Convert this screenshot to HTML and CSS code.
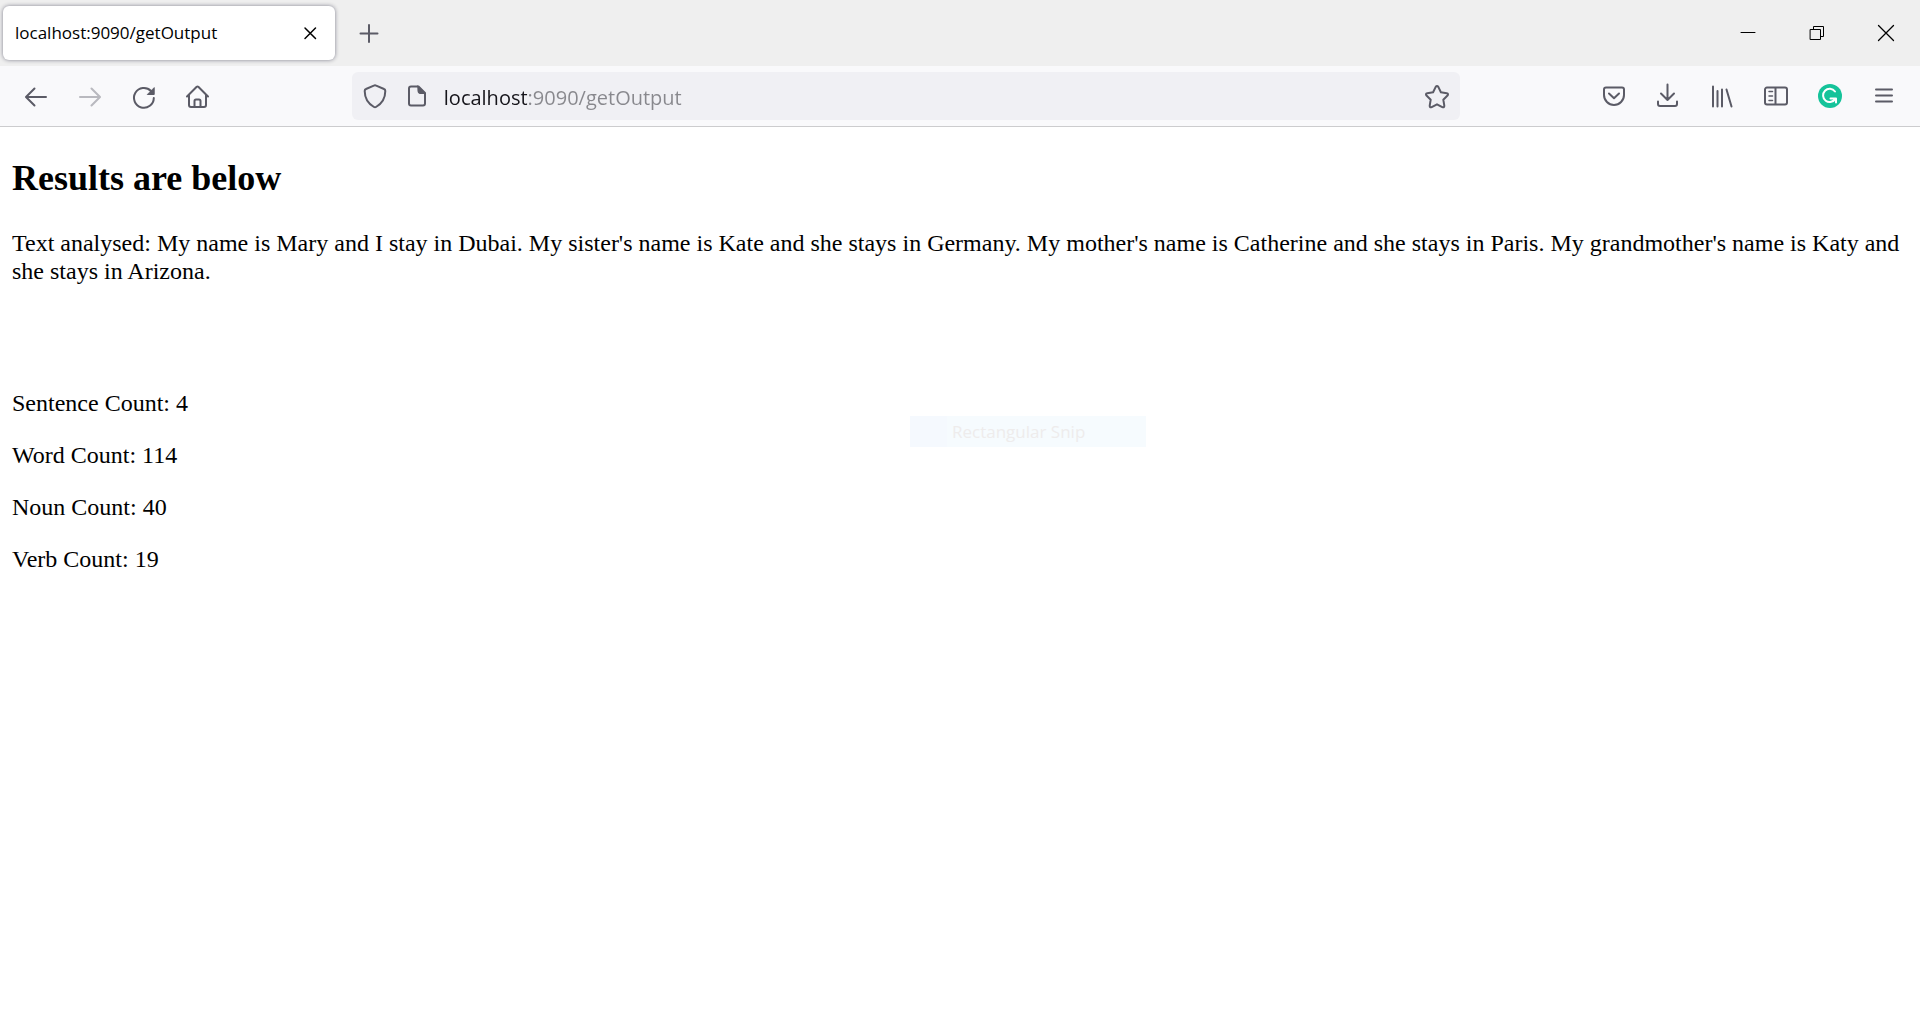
FILE: index.html
```html
<!DOCTYPE html>
<html lang="en">
<head>
<meta charset="utf-8">
<title>localhost:9090/getOutput</title>
<link rel="stylesheet" href="styles.css">
</head>
<body>
<header class="browser">
  <div class="tab-strip">
    <div class="tab">
      <span class="tab-title">localhost:9090/getOutput</span>
      <button class="tab-close" type="button" aria-label="Close tab">
        <svg class="icon" viewBox="0 0 30 30"><path d="M10 10l10.500 10.500M20.500 10L10 20.500" stroke-width="1.500"/></svg>
      </button>
    </div>
    <button class="tool-button" type="button" aria-label="New tab">
      <svg class="icon" viewBox="0 0 30 30"><path d="M15 7v17M6.500 15.500h17"/></svg>
    </button>
    <div class="window-controls">
      <button class="window-button" type="button" aria-label="Minimize">
        <svg class="icon" viewBox="0 0 30 30"><path d="M8 14.500h14" stroke-width="1"/></svg>
      </button>
      <button class="window-button" type="button" aria-label="Restore">
        <svg class="icon" viewBox="0 0 30 30"><path d="M8.500 11.500h10v10h-10zM11.500 11v-2.500h10v10H19" stroke-width="1"/></svg>
      </button>
      <button class="window-button" type="button" aria-label="Close window">
        <svg class="icon" viewBox="0 0 30 30"><path d="M7.500 7.500l15 15M22.500 7.500l-15 15" stroke-width="1.300"/></svg>
      </button>
    </div>
  </div>
  <nav class="toolbar" aria-label="Navigation">
    <div class="tool-group">
      <button class="tool-button" type="button" aria-label="Back">
        <svg class="icon" viewBox="0 0 30 30"><path d="M25 16H5.500M13.500 7.500L5 16l8.500 8.500"/></svg>
      </button>
      <button class="tool-button" type="button" aria-label="Forward" disabled>
        <svg class="icon" viewBox="0 0 30 30"><path d="M5 16h19.500M16.500 7.500L25 16l-8.500 8.500"/></svg>
      </button>
      <button class="tool-button" type="button" aria-label="Reload">
        <svg class="icon" viewBox="0 0 30 30"><path d="M24.800 17A9.900 9.900 0 1 1 22 10"/><path class="solid" d="M25.200 7v6.500h-6.500z"/></svg>
      </button>
      <button class="tool-button" type="button" aria-label="Home">
        <svg class="icon" viewBox="0 0 30 30"><path d="M4 15.500L13.700 5.800q.8-.7 1.600 0L25 15.500M6 13.500V24a2 2 0 0 0 2 2h13a2 2 0 0 0 2-2V13.500M11.500 26v-6a1.500 1.500 0 0 1 1.500-1.500h3a1.500 1.500 0 0 1 1.500 1.500v6"/></svg>
      </button>
    </div>
    <div class="url-bar">
      <svg class="icon" viewBox="0 0 30 30"><path d="M15 4.200q.6 0 1.200.4L24 8q1.300.5 1.300 2C25.300 17 22 22.500 16 26q-1 .6-2 0C8 22.500 4.700 17 4.700 10q0-1.500 1.300-2l7.800-3.400q.6-.4 1.200-.4z"/></svg>
      <svg class="icon" viewBox="0 0 30 30"><path d="M16.500 5.500H9a2 2 0 0 0-2 2v15a2 2 0 0 0 2 2h12a2 2 0 0 0 2-2V12z"/><path class="solid" d="M16 5l7.500 7.500H18a2 2 0 0 1-2-2z"/></svg>
      <input class="url-input" type="text" value="localhost:9090/getOutput" aria-label="Address">
      <button class="star-button" type="button" aria-label="Bookmark this page">
        <svg class="icon" viewBox="0 0 30 30"><path d="M13.700 5.900q1.300-2 2.600 0l2.600 5.400 5.800.9q2.200.6.800 2.300l-4.200 4.200 1 5.900q.1 2.300-2 1.500L15 23.300l-5.300 2.800q-2.100.8-2-1.500l1-5.900L4.500 14.500q-1.400-1.700.8-2.300l5.800-.9z"/></svg>
      </button>
    </div>
    <div class="tool-group tool-group-end">
      <button class="tool-button" type="button" aria-label="Save to Pocket">
        <svg class="icon" viewBox="0 0 30 30"><path d="M7 6.500h16a2 2 0 0 1 2 2V14a10 10 0 0 1-20 0V8.500a2 2 0 0 1 2-2zM10 12.500l5 4.700 5-4.700"/></svg>
      </button>
      <button class="tool-button" type="button" aria-label="Downloads">
        <svg class="icon" viewBox="0 0 30 30"><path d="M14.500 3.500V19M8 12.500l6.500 6.500 6.500-6.500M5 20.500V23a2 2 0 0 0 2 2h15a2 2 0 0 0 2-2v-2.500"/></svg>
      </button>
      <button class="tool-button" type="button" aria-label="Library">
        <svg class="icon" viewBox="0 0 30 30"><path d="M6 5.500v20M10.500 10v15.500M15 8.500v17M19.500 8.500l5 17"/></svg>
      </button>
      <button class="tool-button" type="button" aria-label="Sidebars">
        <svg class="icon" viewBox="0 0 30 30"><path d="M6 6.500h18a2 2 0 0 1 2 2v13a2 2 0 0 1-2 2H6a2 2 0 0 1-2-2v-13a2 2 0 0 1 2-2zM14.500 6.500v17"/><path d="M8 10.500h3.500M8 15h3.500M8 19.500h3.500" stroke-width="1.500"/></svg>
      </button>
      <button class="tool-button" type="button" aria-label="Grammarly">
        <svg class="icon" viewBox="0 0 30 30"><circle class="badge" cx="15" cy="15" r="12"/><path class="mark" d="M20 10.500A6.600 6.600 0 1 0 20.500 17.500M15.500 17.500h5.500v4"/></svg>
      </button>
      <button class="tool-button" type="button" aria-label="Menu">
        <svg class="icon" viewBox="0 0 30 30"><path d="M7 8.500h16M7 14.500h16M7 20.500h16"/></svg>
      </button>
    </div>
  </nav>
</header>
<main class="page">
  <h2 class="heading">Results are below</h2>
  <p class="analysed">Text analysed: My name is Mary and I stay in Dubai. My sister's name is Kate and she stays in Germany. My mother's name is Catherine and she stays in Paris. My grandmother's name is Katy and she stays in Arizona.</p>
  <div class="counts">
    <p>Sentence Count: 4</p>
    <p>Word Count: 114</p>
    <p>Noun Count: 40</p>
    <p>Verb Count: 19</p>
  </div>
</main>
<div class="snip">Rectangular Snip</div>
</body>
</html>
```
FILE: styles.css
```css
* {
  box-sizing: border-box;
}

body {
  margin: 0;
  background: #fff;
  color: #000;
  font: 24px/28px "Liberation Serif", serif;
}

button {
  display: flex;
  align-items: center;
  justify-content: center;
  flex: none;
  padding: 0;
  border: 0;
  background: none;
  color: inherit;
}

.browser {
  color: #5b5b66;
  font-family: "Open Sans", "Noto Sans", sans-serif;
}

.icon {
  display: block;
  flex: none;
  width: 30px;
  height: 30px;
  fill: none;
  stroke: currentColor;
  stroke-width: 2;
  stroke-linecap: round;
  stroke-linejoin: round;
}

.icon .solid {
  fill: currentColor;
  stroke-width: 1;
}

.icon .badge {
  fill: #15c39a;
  stroke: none;
}

.icon .mark {
  stroke: #fff;
}

.tab-strip {
  display: flex;
  align-items: center;
  gap: 10px;
  height: 66px;
  padding-left: 3px;
  background: #efefef;
}

.tab {
  display: flex;
  align-items: center;
  justify-content: space-between;
  width: 332px;
  height: 54px;
  padding: 0 10px 0 12px;
  border-radius: 6px;
  background: #fff;
  box-shadow: 0 0 4px #80808e;
  color: #000;
}

.tab-title {
  font-size: 17px;
}

.window-controls {
  display: flex;
  margin-left: auto;
  color: #000;
}

.window-button {
  width: 69px;
  height: 66px;
}

.toolbar {
  display: grid;
  grid-template-columns: auto minmax(12px, 13fr) minmax(200px, 111fr) minmax(12px, 13fr) auto;
  align-items: center;
  padding: 6px 12px;
  border-bottom: 1px solid #ccccce;
  background: #f9f9fb;
}

.tool-group {
  display: flex;
  gap: 6px;
}

.tool-group-end {
  grid-column: 5;
}

.tool-button {
  width: 48px;
  height: 48px;
}

.tool-button:disabled {
  opacity: 0.4;
}

.url-bar {
  display: flex;
  grid-column: 3;
  align-items: center;
  gap: 12px;
  height: 48px;
  padding: 0 8px;
  border-radius: 6px;
  background: #f0f0f4;
}

.url-input {
  flex: 1;
  min-width: 0;
  height: 42px;
  padding: 2px 0 0;
  border: 0;
  outline: 0;
  background: linear-gradient(90deg, #15141a 83px, #88888d 83px);
  background-clip: text;
  color: transparent;
  font: 20px/40px "Open Sans", "Noto Sans", sans-serif;
}

.page {
  padding: 30px 12px;
}

.heading {
  margin: 0 0 30px;
  font-size: 36px;
  line-height: 42px;
}

.analysed {
  margin: 0 0 104px;
}

.counts {
  display: grid;
  gap: 24px;
}

.counts p {
  margin: 0;
}

.snip {
  position: absolute;
  top: 416px;
  left: 910px;
  width: 236px;
  padding: 2px 0 1px 42px;
  background: linear-gradient(90deg, #f5f9fe 37px, #f6fbfe 37px);
  color: #eeecec;
  font-family: "Open Sans", "Noto Sans", sans-serif;
  font-size: 17px;
}
```
